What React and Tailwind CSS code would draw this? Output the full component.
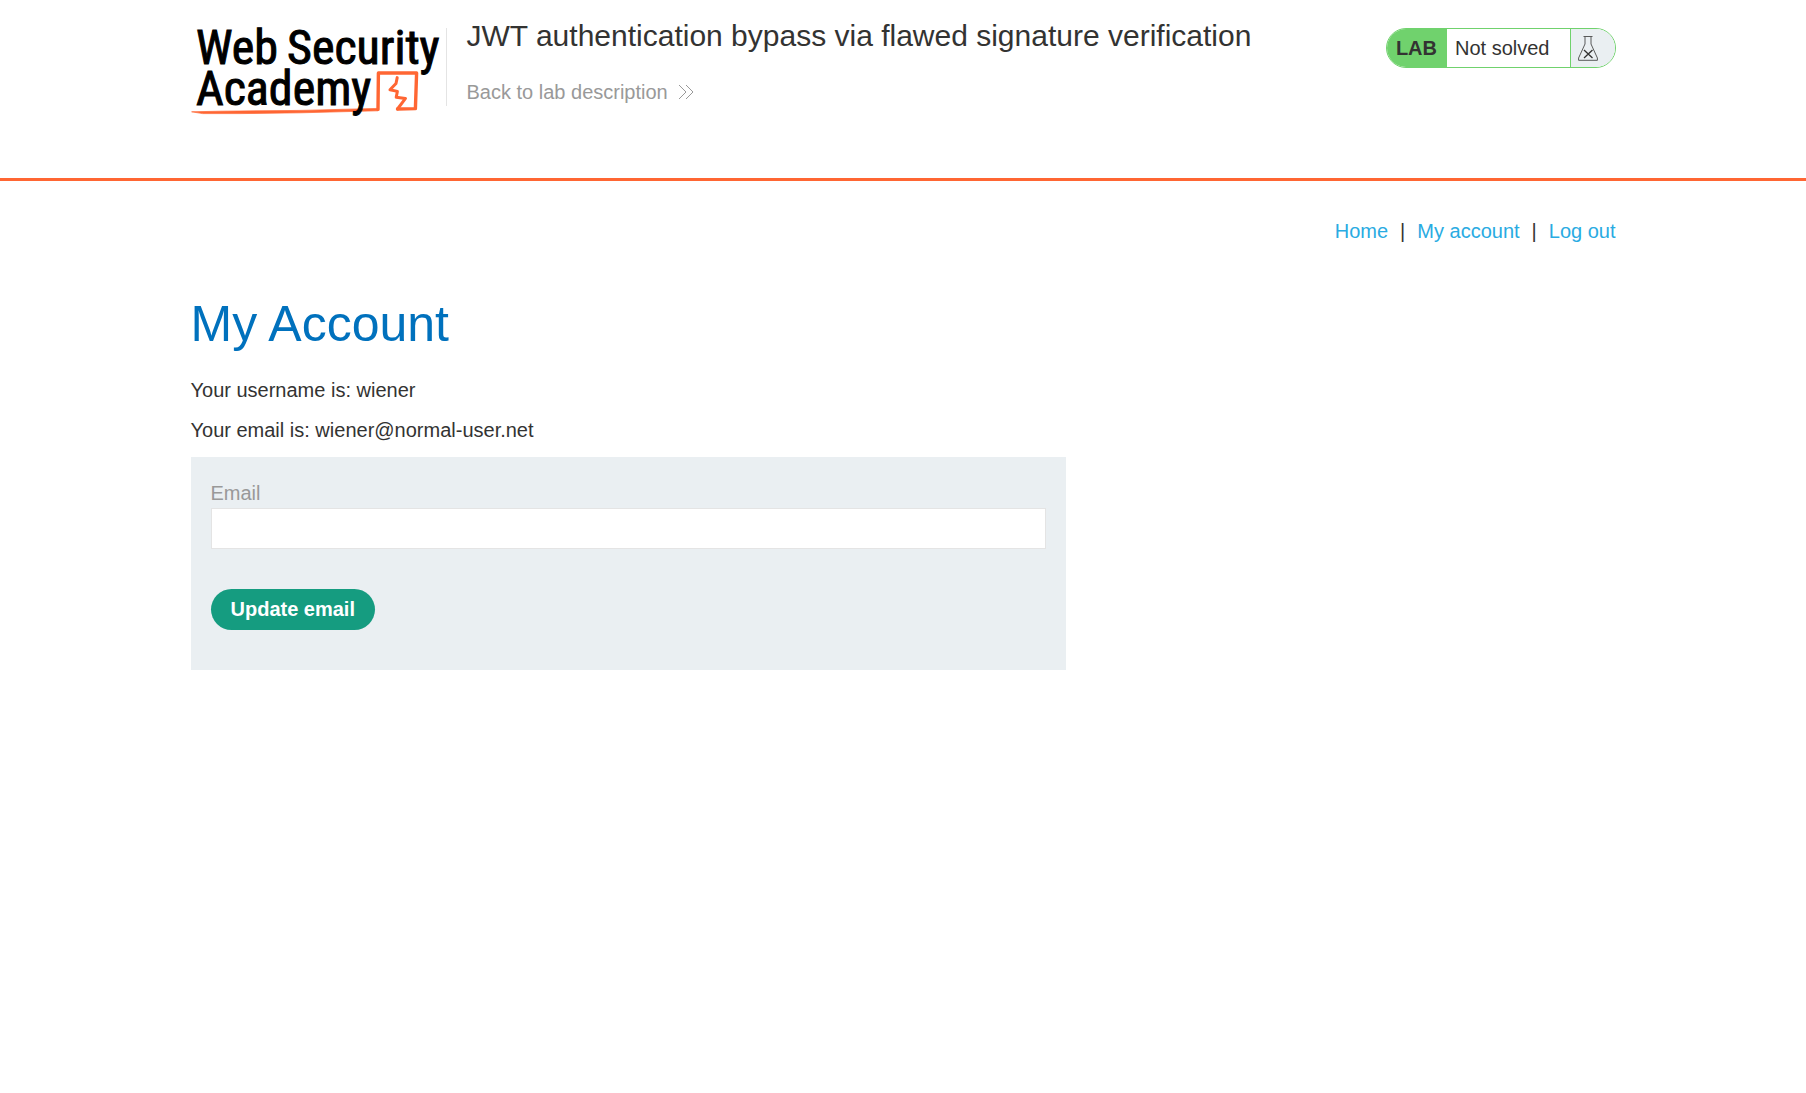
import React, { useState } from "react";

const navLinks = ["Home", "My account", "Log out"];

const AcademyLogo = () => (
  <a href="#" aria-label="Web Security Academy" className="shrink-0">
    <svg width="255" height="92" viewBox="0 0 255 92" className="block overflow-visible">
      <g
        fill="none"
        stroke="#ff6633"
        strokeLinecap="round"
        strokeLinejoin="round"
      >
        <path
          d="M1 83.8 L30 83.2 L110 82.4 L187 80.4 L187 82.8 L110 84.8 L50 85.6 L12 85.6 Z"
          fill="#ff6633"
          strokeWidth="0.7"
        />
        <path d="M187 81.4 L187.4 45 L225.6 45 L224.4 80.6 L206.5 81" strokeWidth="3.4" />
        <path d="M206.5 81 L214.5 70.4 L205.2 69.2 L206.4 63.4 L199 61.8 L205 55.5 L206.2 49.6" strokeWidth="3" />
      </g>
      <g fontFamily="'Roboto Condensed', Roboto, sans-serif" fontSize="48" fill="#000" stroke="#000" strokeWidth="1">
        <text x="5" y="36">Web <tspan x="96">Security</tspan></text>
        <text x="5" y="77">Academy</text>
      </g>
    </svg>
  </a>
);

const FlaskIcon = () => (
  <svg width="20" height="25" viewBox="0 0 20 25" fill="none" stroke="#333332">
    <path d="M5.5 .5 H14.5 M7 1 V8 L.6 22 V24.3 H19.4 V22 L13 8 V1" strokeWidth="0.8" />
    <path d="M6 14 L14.5 22 M14.5 14 L6 22" strokeWidth="1.3" />
  </svg>
);

const LabStatus = () => (
  <div className="flex h-10 shrink-0 overflow-hidden rounded-full border border-[#70d26d]">
    <p className="flex items-center bg-[#70d26d] pl-[9px] pr-[10px] font-bold">LAB</p>
    <p className="flex items-center border-r border-[#70d26d] pl-2 pr-5">Not solved</p>
    <span className="flex w-11 items-center bg-[#eaeff2] pl-[7px]">
      <FlaskIcon />
    </span>
  </div>
);

export default function App() {
  const [email, setEmail] = useState("");

  return (
    <div className="font-['Liberation_Sans',sans-serif] text-xl leading-6 text-[#333332]">
      {/* Lab header */}
      <header className="border-b-3 border-[#ff6633] px-6 pb-[58px] pt-5">
        <div className="mx-auto flex max-w-[1425px] items-start">
          <div className="flex min-w-0 flex-1 items-start">
            <div className="pt-2">
              <AcademyLogo />
            </div>
            <div className="mt-2 h-[78px] w-px shrink-0 bg-[#e4e4e4]" />
            <div className="pl-5">
              <h2 className="text-[30px] leading-8">
                JWT authentication bypass via flawed signature verification
              </h2>
              <a href="#" className="mt-7 flex items-center gap-[10px] text-[#999]">
                Back to lab description
                <svg width="16" height="16" viewBox="0 0 16 16" fill="none" stroke="#999">
                  <path d="M1 1 L8 8 L1 15 M8 1 L15 8 L8 15" />
                </svg>
              </a>
            </div>
          </div>
          <div className="pt-2">
            <LabStatus />
          </div>
        </div>
      </header>

      <main className="px-6">
        <div className="mx-auto max-w-[1425px]">
          {/* Top links */}
          <nav className="flex justify-end gap-3 pt-[38px]">
            {navLinks.map((label, i) => (
              <React.Fragment key={label}>
                {i > 0 && <span>|</span>}
                <a href="#" className="text-[#29abe2]">
                  {label}
                </a>
              </React.Fragment>
            ))}
          </nav>

          <h1 className="mt-[51px] text-[50px] leading-[60px] text-[#0071bd]">My Account</h1>

          <div className="mt-6 space-y-4">
            <p>Your username is: wiener</p>
            <p>Your email is: wiener@normal-user.net</p>
          </div>

          {/* Change email */}
          <form
            className="mt-[15px] max-w-[875px] bg-[#eaeff2] px-5 pb-10 pt-6"
            onSubmit={(e) => e.preventDefault()}
          >
            <label htmlFor="email" className="block text-[#999]">
              Email
            </label>
            <input
              id="email"
              type="email"
              value={email}
              onChange={(e) => setEmail(e.target.value)}
              className="mt-[3px] block h-[41px] w-full border border-[#e4e4e4] bg-white px-2"
            />
            <button
              type="submit"
              className="mt-10 block h-[41px] rounded-full bg-[#159c80] px-5 pb-[2px] font-bold text-white"
            >
              Update email
            </button>
          </form>
        </div>
      </main>
    </div>
  );
}
